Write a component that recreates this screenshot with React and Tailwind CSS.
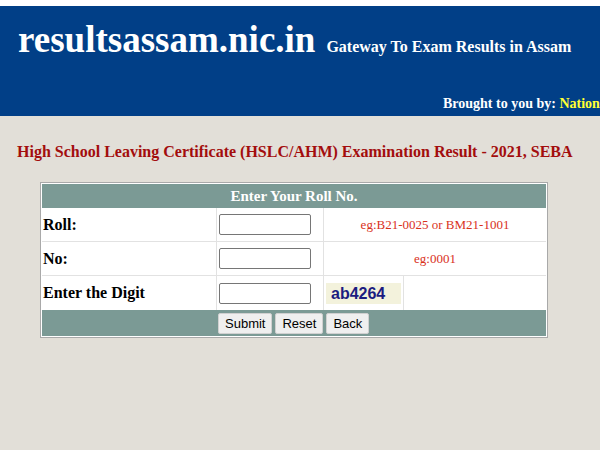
import React from "react";

export default function App() {
  const serif = { fontFamily: '"Liberation Serif", "Times New Roman", serif' };
  return (
    <div className="w-[600px] h-[450px] overflow-hidden bg-[#e2dfd8]" style={serif}>
      <div className="h-[6px] bg-white" />
      <div className="h-[110px] bg-[#013f87] relative overflow-hidden">
        <div className="flex items-baseline pl-[18px] pt-[14px] whitespace-nowrap">
          <span className="text-white font-bold text-[37px] leading-[40px]">resultsassam.nic.in</span>
          <span className="text-white font-bold text-[16px] ml-[11px]">Gateway To Exam Results in Assam</span>
        </div>
        <div className="absolute left-[443px] top-[87px] whitespace-nowrap text-[14px] font-bold text-white">
          Brought to you by: <span className="text-[#ffff33]">National Informatics Centre</span>
        </div>
      </div>
      <div className="pl-[17px] pt-[24px] text-[16px] font-bold text-[#a30d0d] whitespace-nowrap">
        High School Leaving Certificate (HSLC/AHM) Examination Result - 2021, SEBA
      </div>
      <div className="pl-[40px] pt-[18px]">
        <table className="w-[508px] border border-[#a9a9a9] bg-white border-separate border-spacing-0 p-px">
          <tbody>
            <tr>
              <td colSpan={4} className="h-[24px] bg-[#7b9a95] text-center text-white font-bold text-[15px] leading-[24px]">
                Enter Your Roll No.
              </td>
            </tr>
            <tr>
              <td className="h-[34px] w-[175px] pl-[1px] font-bold text-[16px] border-b border-r border-[#e2e2e2]">Roll:</td>
              <td className="w-[107px] border-b border-r border-[#e2e2e2] pl-[2px]">
                <input className="w-[92px] h-[21px] border border-[#767676] rounded-[2px] bg-white block" />
              </td>
              <td colSpan={2} className="border-b border-[#e2e2e2] text-center text-[13px] text-[#d9311c]">
                eg:B21-0025 or BM21-1001
              </td>
            </tr>
            <tr>
              <td className="h-[34px] pl-[1px] font-bold text-[16px] border-b border-r border-[#e2e2e2]">No:</td>
              <td className="border-b border-r border-[#e2e2e2] pl-[2px]">
                <input className="w-[92px] h-[21px] border border-[#767676] rounded-[2px] bg-white block" />
              </td>
              <td colSpan={2} className="border-b border-[#e2e2e2] text-center text-[13px] text-[#d9311c]">
                eg:0001
              </td>
            </tr>
            <tr>
              <td className="h-[34px] pl-[1px] font-bold text-[16px] border-r border-[#e2e2e2]">Enter the Digit</td>
              <td className="border-r border-[#e2e2e2] pl-[2px]">
                <input className="w-[92px] h-[21px] border border-[#767676] rounded-[2px] bg-white block" />
              </td>
              <td className="w-[80px] border-r border-[#e2e2e2] pl-[2px]">
                <div
                  className="w-[75px] h-[21px] bg-[#f3f2dc] text-[#1c1c80] font-bold text-[16px] leading-[21px] pl-[5px]"
                  style={{ fontFamily: '"Liberation Sans", Arial, sans-serif' }}
                >
                  ab4264
                </div>
              </td>
              <td />
            </tr>
            <tr>
              <td colSpan={4} className="h-[26px] bg-[#7b9a95]">
                <div
                  className="flex gap-[3px] pl-[176px] text-[13px]"
                  style={{ fontFamily: '"Liberation Sans", Arial, sans-serif' }}
                >
                  <button className="h-[21px] px-[6px] bg-[#efefef] border border-[#d0d0d0] rounded-[2px]">Submit</button>
                  <button className="h-[21px] px-[6px] bg-[#efefef] border border-[#d0d0d0] rounded-[2px]">Reset</button>
                  <button className="h-[21px] px-[6px] bg-[#efefef] border border-[#d0d0d0] rounded-[2px]">Back</button>
                </div>
              </td>
            </tr>
          </tbody>
        </table>
      </div>
    </div>
  );
}
